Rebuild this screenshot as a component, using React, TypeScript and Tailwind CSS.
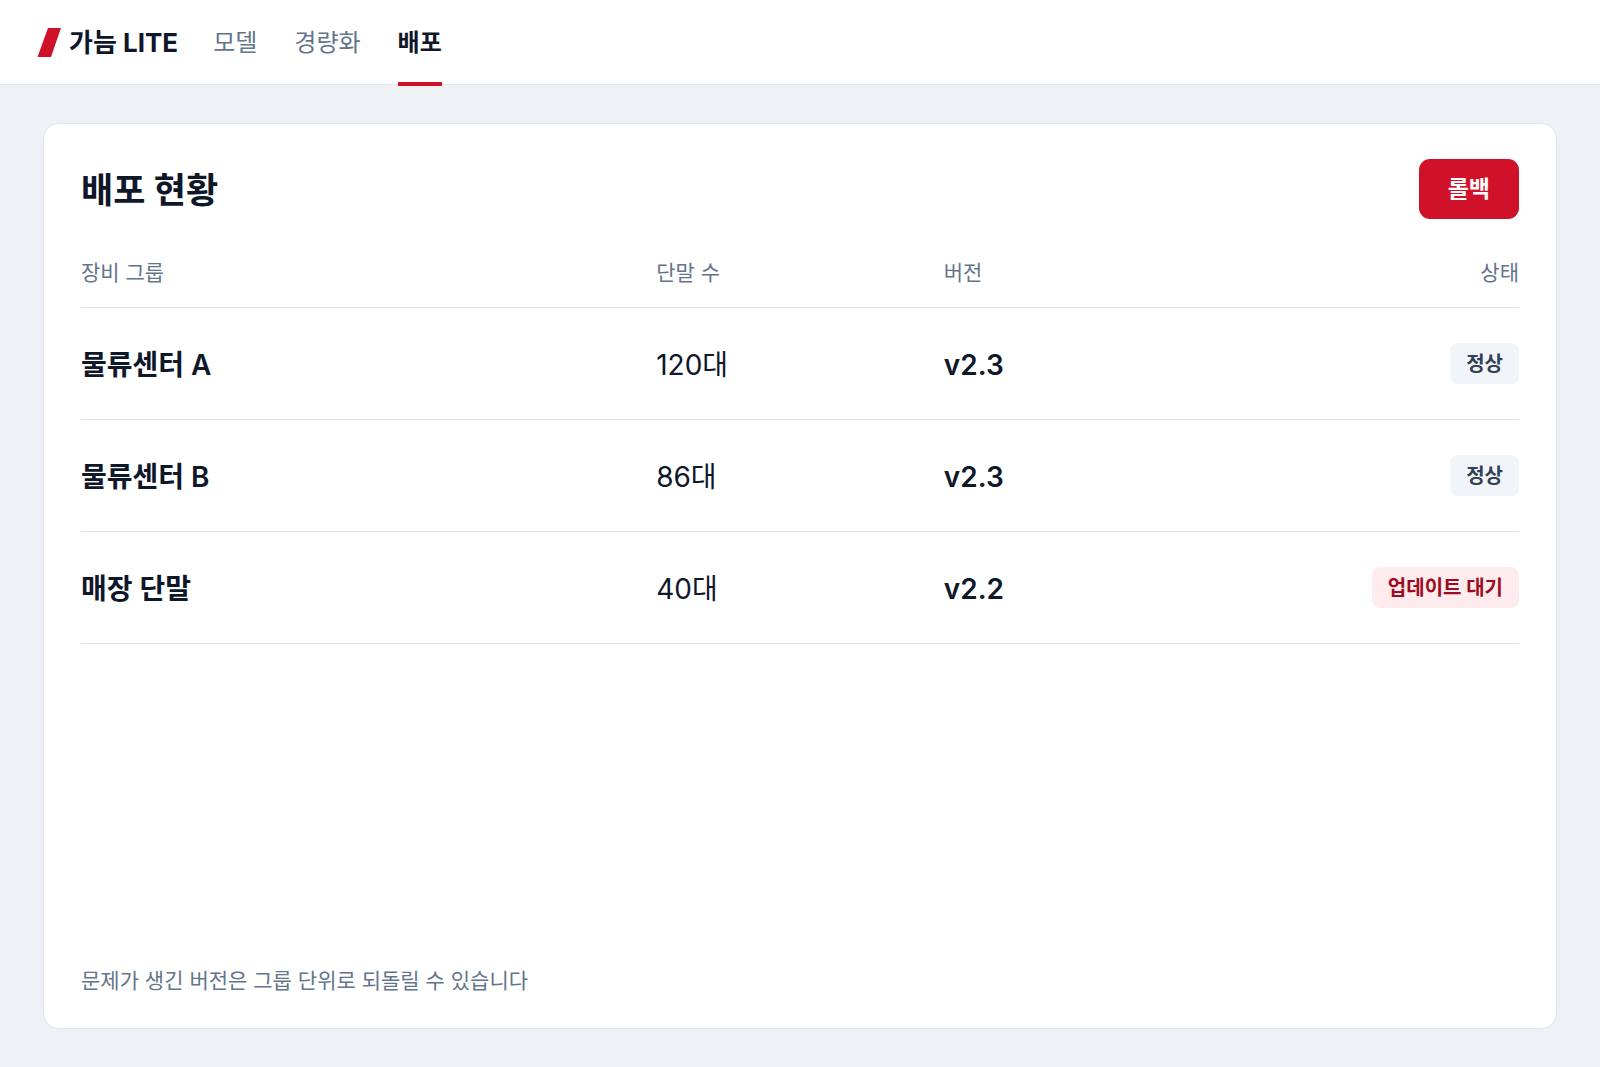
import clsx from "clsx";

const tabs = [
  { label: "모델", active: false },
  { label: "경량화", active: false },
  { label: "배포", active: true },
];

const groups = [
  { name: "물류센터 A", devices: "120대", version: "v2.3", status: "정상", pending: false },
  { name: "물류센터 B", devices: "86대", version: "v2.3", status: "정상", pending: false },
  { name: "매장 단말", devices: "40대", version: "v2.2", status: "업데이트 대기", pending: true },
];

function Logo() {
  return (
    <a href="#" className="flex items-center gap-2 text-[26px] font-bold">
      <svg width="24" height="29" viewBox="0 0 24 29" aria-hidden="true">
        <path d="M11 0H24L14 29H0.5z" fill="#cf1229" />
      </svg>
      가늠 LITE
    </a>
  );
}

export default function App() {
  return (
    <div className="min-h-screen flex flex-col bg-[#edf1f5] text-[#0f172a] font-['Inter','Noto_Sans_CJK_KR',sans-serif]">
      <header className="flex h-[85px] items-stretch gap-[35px] border-b border-[#e2e8f0] bg-white px-[37px]">
        <Logo />
        <nav className="flex items-stretch gap-[37px] text-2xl">
          {tabs.map((tab) => (
            <a
              key={tab.label}
              href="#"
              aria-current={tab.active ? "page" : undefined}
              className={clsx(
                "-mb-0.5 flex items-center border-y-4 border-t-transparent",
                tab.active
                  ? "border-b-[#cf1229] font-bold"
                  : "border-b-transparent text-[#64748b]"
              )}
            >
              {tab.label}
            </a>
          ))}
        </nav>
      </header>

      <main className="flex flex-1 flex-col px-[43px] py-[38px]">
        <section className="flex flex-1 flex-col rounded-2xl border border-[#dfe6ef] bg-white px-[37px] pt-[35px] pb-8">
          <div className="flex items-center justify-between">
            <h1 className="pt-0.5 text-[35px] font-bold">배포 현황</h1>
            <button
              type="button"
              className="h-[60px] rounded-[11px] bg-[#cf1229] px-[29px] text-[23px] font-bold text-white"
            >
              롤백
            </button>
          </div>

          <table className="mt-8 w-full table-fixed text-left">
            <thead>
              <tr className="h-14 border-b border-[#dbe2ea] text-[21px] text-[#64748b]">
                <th scope="col" className="w-2/5 pb-3 font-normal">장비 그룹</th>
                <th scope="col" className="w-1/5 pb-3 font-normal">단말 수</th>
                <th scope="col" className="w-1/5 pb-3 font-normal">버전</th>
                <th scope="col" className="w-1/5 pb-3 text-right font-normal">상태</th>
              </tr>
            </thead>
            <tbody>
              {groups.map((group) => (
                <tr key={group.name} className="h-28 border-b border-[#dbe2ea] text-[28px]">
                  <td className="pt-1 font-semibold">{group.name}</td>
                  <td className="pt-1">{group.devices}</td>
                  <td className="pt-1 font-semibold">{group.version}</td>
                  <td>
                    <div className="flex justify-end">
                      <span
                        className={clsx(
                          "flex h-[41px] items-center rounded-lg px-4 pt-0.5 text-xl font-bold",
                          group.pending
                            ? "bg-[#fdebed] text-[#9b0c20]"
                            : "bg-[#f1f5f9] text-[#334155]"
                        )}
                      >
                        {group.status}
                      </span>
                    </div>
                  </td>
                </tr>
              ))}
            </tbody>
          </table>

          <p className="mt-auto text-[21px] text-[#64748b]">
            문제가 생긴 버전은 그룹 단위로 되돌릴 수 있습니다
          </p>
        </section>
      </main>
    </div>
  );
}
